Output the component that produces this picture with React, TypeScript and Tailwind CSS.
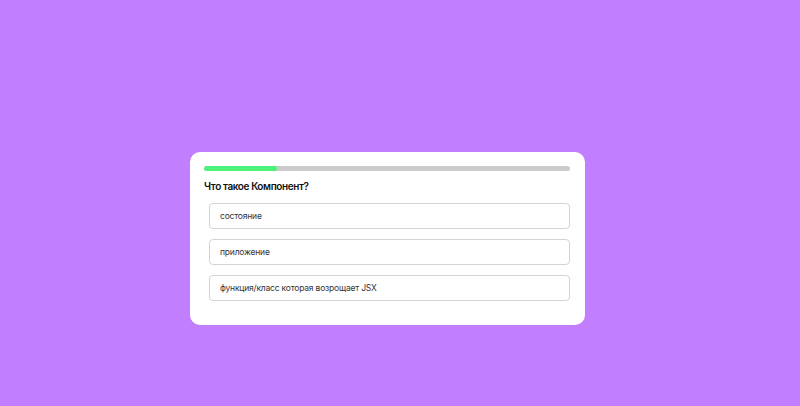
const answers = ['состояние', 'приложение', 'функция/класс которая возрощает JSX']

// one question of the quiz, 1 of 5 answered
export default function App() {
  const progress = 20

  return (
    <div className="min-h-[406px] w-full bg-[#c17fff] pl-[190px] pt-[152px] font-['Inter',sans-serif]">
      <div className="w-[395px] rounded-[10px] bg-white pb-[24px] pl-[14px] pr-[15px] pt-[14px]">
        <div className="h-[5px] w-full overflow-hidden rounded-full bg-[#cbcbcb]">
          <div className="h-full rounded-full bg-[#4cf27a]" style={{ width: `${progress}%` }} />
        </div>
        <h2 className="mt-[8px] text-[10px] font-semibold leading-[14px] tracking-[-0.4px] text-[#111]">
          Что такое Компонент?
        </h2>
        <div className="mt-[10px] flex flex-col gap-[10px] pl-[5px]">
          {answers.map((a) => (
            <button
              key={a}
              type="button"
              className="h-[26px] w-full rounded-[4px] border border-[#d4d4d4] bg-white px-[10px] text-left text-[8.5px] tracking-[-0.2px] text-[#333]"
            >
              {a}
            </button>
          ))}
        </div>
      </div>
    </div>
  )
}
